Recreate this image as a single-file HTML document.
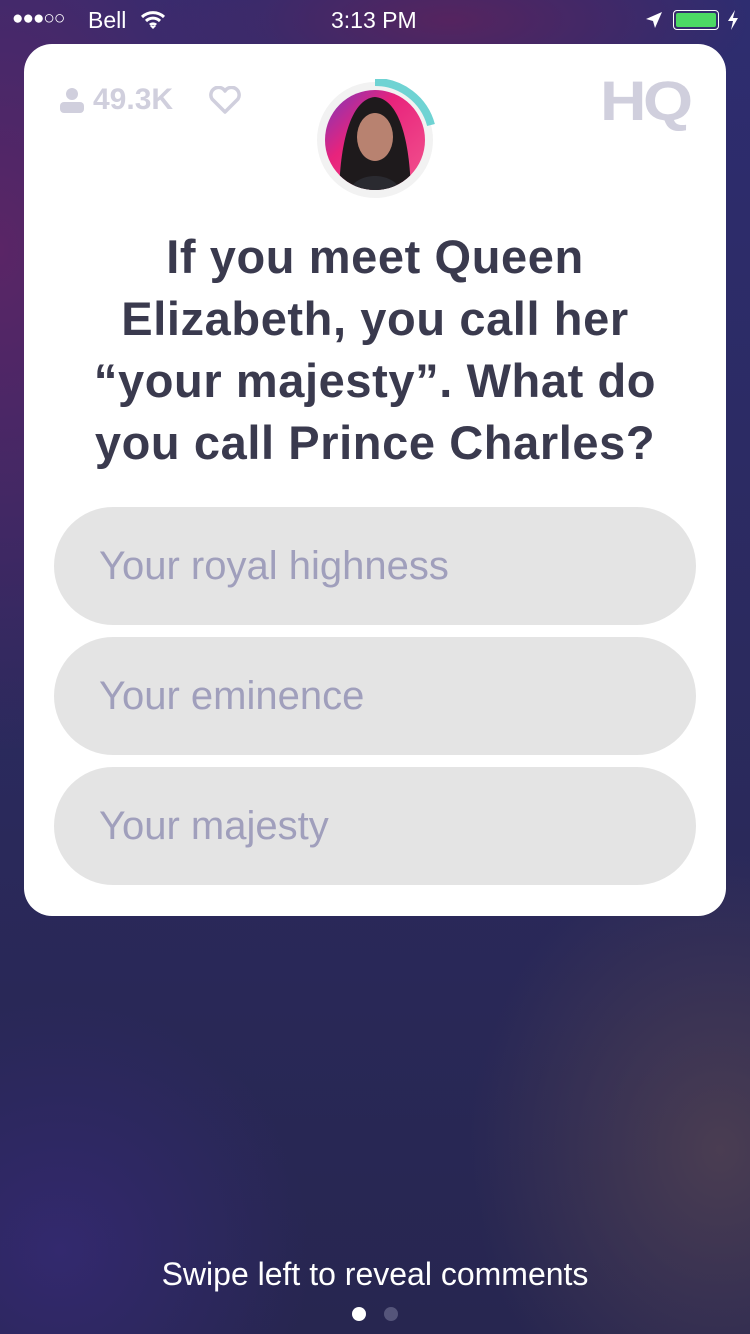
<!DOCTYPE html>
<html><head><meta charset="utf-8"><style>
*{margin:0;padding:0;box-sizing:border-box}
body{width:750px;height:1334px;overflow:hidden;position:relative;font-family:"Liberation Sans",sans-serif;
background:radial-gradient(ellipse 300px 500px at 0px 250px,#5a2566 0%,rgba(90,37,102,0) 100%),
radial-gradient(ellipse 250px 300px at 720px 1150px,#4a3d52 0%,rgba(74,61,82,0) 100%),
radial-gradient(ellipse 250px 250px at 60px 1250px,#33296e 0%,rgba(51,41,110,0) 100%),
radial-gradient(ellipse 300px 100px at 450px 20px,#55245f 0%,rgba(85,36,95,0) 100%),
linear-gradient(180deg,#2e2d70 0%,#2b2a5e 50%,#272650 100%);}
.sb{position:absolute;top:0;left:0;width:750px;height:40px;color:#fff;font-size:23px}
.card{position:absolute;left:24px;top:44px;width:702px;height:872px;background:#fff;border-radius:28px}
.q{position:absolute;top:226px;left:0;width:750px;text-align:center;font-weight:bold;font-size:47px;line-height:62px;color:#3a3a4e;letter-spacing:0.6px}
.opt{position:absolute;left:54px;width:642px;height:118px;border-radius:59px;background:#e4e4e4;color:#a09fbc;font-size:40px;line-height:118px;padding-left:45px}
.swipe{position:absolute;top:1256px;width:750px;text-align:center;color:#fff;font-size:32px}
</style></head><body>
<div class="sb">
<span style="position:absolute;left:12px;top:8px;font-size:19px;letter-spacing:-1px">●●●○○</span>
<span style="position:absolute;left:88px;top:7px">Bell</span>
<svg style="position:absolute;left:140px;top:10px" width="26" height="20" viewBox="0 0 26 20"><path d="M2 7a16 16 0 0 1 22 0M6 11a10 10 0 0 1 14 0M10 15a4.5 4.5 0 0 1 6 0" stroke="#fff" stroke-width="3" fill="none"/><path d="M13 19l-3-3h6z" fill="#fff"/></svg>
<span style="position:absolute;left:331px;top:7px">3:13 PM</span>
<svg style="position:absolute;left:645px;top:11px" width="18" height="18"><path d="M17 1L1 8l7 2 2 7z" fill="#fff"/></svg>
<div style="position:absolute;left:673px;top:10px;width:46px;height:20px;border:1.5px solid #fff;border-radius:4px;padding:2px"><div style="width:100%;height:100%;background:#4cd964;border-radius:2px"></div></div>
<svg style="position:absolute;left:726px;top:10px" width="14" height="20"><path d="M9 0L2 11h5l-2 9 7-12H7z" fill="#fff"/></svg>
</div>
<div class="card"></div>
<svg style="position:absolute;left:60px;top:87px" width="24" height="26"><circle cx="12" cy="7" r="6" fill="#d0cfdd"/><rect x="0" y="15" width="24" height="11" rx="4" fill="#d0cfdd"/></svg>
<span style="position:absolute;left:93px;top:83px;font-size:30px;font-weight:bold;color:#d0cfdd">49.3K</span>
<svg style="position:absolute;left:208px;top:86px" width="34" height="28" viewBox="0 0 34 28"><path d="M17 26L4 13A7.5 7.5 0 0 1 17 5a7.5 7.5 0 0 1 13 8z" fill="none" stroke="#d0cfdd" stroke-width="3.5" stroke-linejoin="round"/></svg>
<span style="position:absolute;left:600px;top:68px;font-size:56px;font-weight:900;color:#d0cfdd;letter-spacing:-3px;transform:scaleX(1.15);transform-origin:left">HQ</span>
<svg style="position:absolute;left:314px;top:79px" width="122" height="122" viewBox="0 0 122 122">
<circle cx="61" cy="61" r="58" fill="#f2f2f2"/>
<path d="M61 3A58 58 0 0 1 117 46" stroke="#6fd3d3" stroke-width="8" fill="none"/>
<defs><clipPath id="c"><circle cx="61" cy="61" r="50"/></clipPath><linearGradient id="g" x1="0" y1="0" x2="1" y2="1"><stop offset="0" stop-color="#5a3ed0"/><stop offset=".4" stop-color="#e8237c"/><stop offset=".8" stop-color="#f04a8a"/><stop offset="1" stop-color="#f5e030"/></linearGradient></defs>
<g clip-path="url(#c)"><rect width="122" height="122" fill="url(#g)"/>
<path d="M25 122C25 70 35 20 61 18c26 2 36 50 36 104z" fill="#1e1a1c"/>
<ellipse cx="61" cy="58" rx="18" ry="24" fill="#b88270"/>
<path d="M30 122c5-20 20-25 31-25s26 5 31 25z" fill="#2a2a30"/></g>
</svg>
<div class="q">If you meet Queen<br>Elizabeth, you call her<br>“your majesty”. What do<br>you call Prince Charles?</div>
<div class="opt" style="top:507px">Your royal highness</div>
<div class="opt" style="top:637px">Your eminence</div>
<div class="opt" style="top:767px">Your majesty</div>
<div class="swipe">Swipe left to reveal comments</div>
<div style="position:absolute;left:352px;top:1307px;width:14px;height:14px;border-radius:50%;background:#fff"></div>
<div style="position:absolute;left:384px;top:1307px;width:14px;height:14px;border-radius:50%;background:#55557a"></div>
</body></html>
